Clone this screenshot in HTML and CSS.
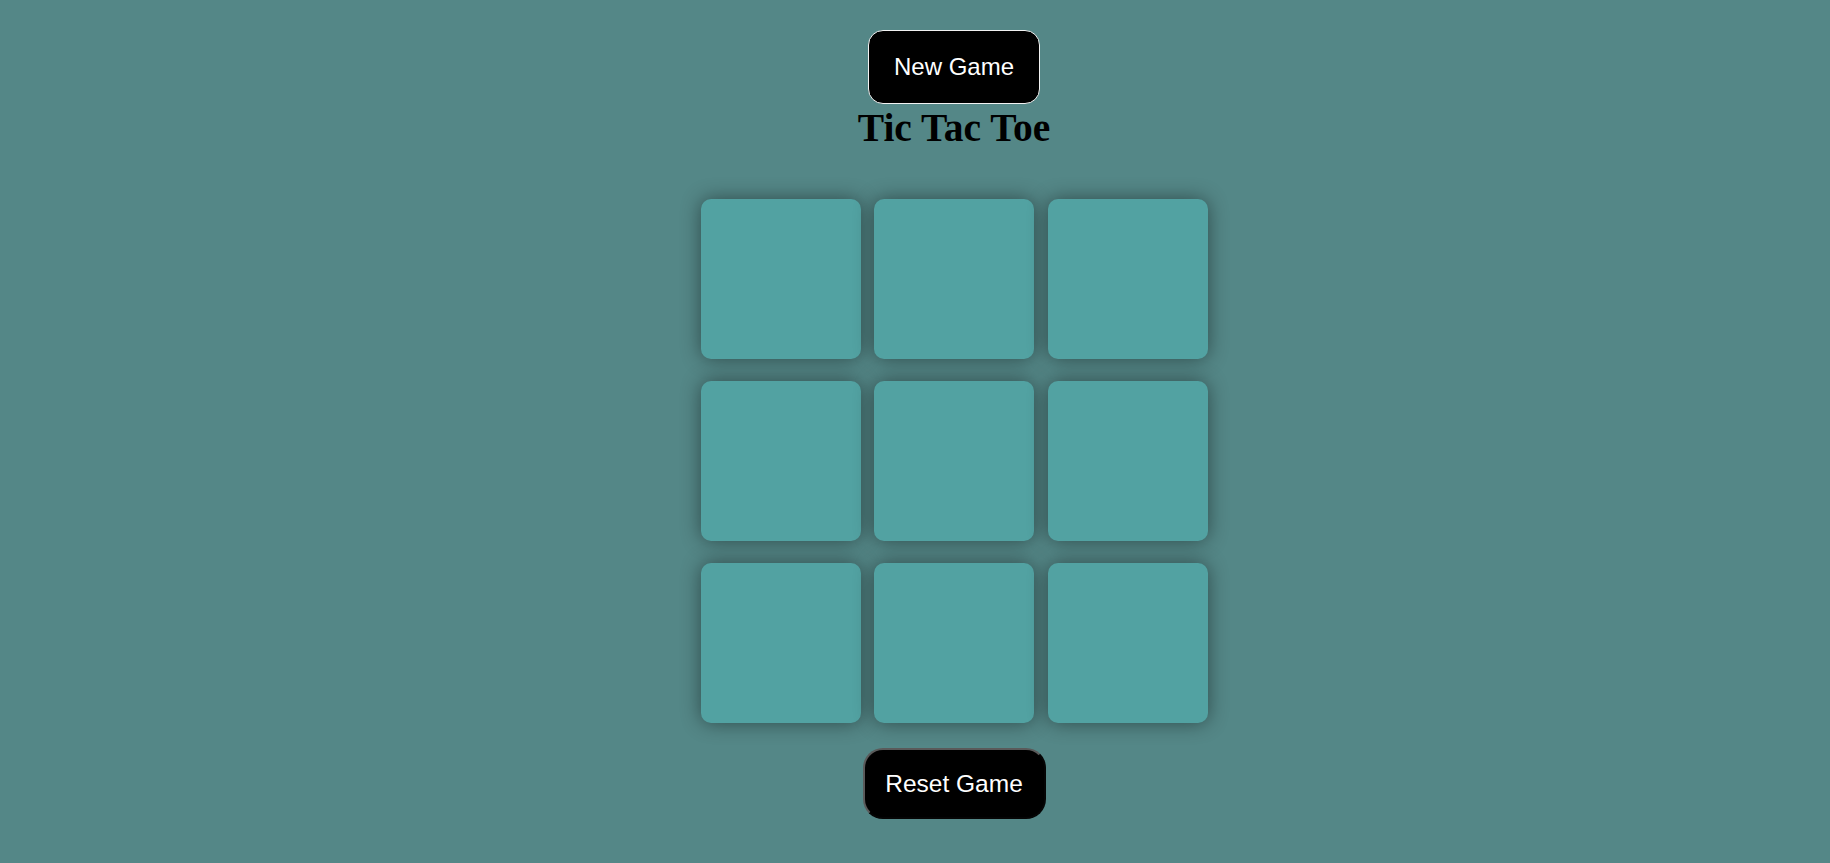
FILE: index.html
```html
<!DOCTYPE html>
<html lang="en">
<head>
<meta charset="utf-8">
<title>Tic Tac Toe</title>
<link rel="stylesheet" href="styles.css">
</head>
<body>
<main class="page">
  <button class="btn btn-new">New Game</button>
  <h1 class="title">Tic Tac Toe</h1>
  <div class="board">
    <div class="cell"></div>
    <div class="cell"></div>
    <div class="cell"></div>
    <div class="cell"></div>
    <div class="cell"></div>
    <div class="cell"></div>
    <div class="cell"></div>
    <div class="cell"></div>
    <div class="cell"></div>
  </div>
  <button class="btn btn-reset">Reset Game</button>
</main>
</body>
</html>
```
FILE: styles.css
```css
html, body {
  margin: 0;
  height: 100%;
}
body {
  background: #548787;
  font-family: "Liberation Serif", "Times New Roman", serif;
  overflow: hidden;
}
.page {
  display: flex;
  flex-direction: column;
  align-items: center;
  padding: 30px 0 0 78px;
}
.btn {
  background: #000;
  color: #fff;
  font-family: "Liberation Sans", Arial, sans-serif;
  padding: 0;
  cursor: pointer;
}
.btn-new {
  width: 172px;
  height: 74px;
  border: 1px solid #f2f2f2;
  border-radius: 15px;
  font-size: 24px;
}
.title {
  margin: 0;
  font-size: 39.5px;
  line-height: 48px;
  font-weight: bold;
  color: #000;
}
.board {
  margin-top: 47px;
  display: grid;
  grid-template-columns: repeat(3, 160px);
  grid-auto-rows: 160px;
  column-gap: 13.5px;
  row-gap: 22px;
}
.cell {
  background: #52a2a2;
  border-radius: 10px;
  box-shadow: 0 0 20px rgba(0, 0, 0, 0.45);
}
.btn-reset {
  margin-top: 25px;
  width: 183px;
  height: 71px;
  border: 2px outset #5a5a5a;
  border-radius: 20px;
  font-size: 24.5px;
}
```
